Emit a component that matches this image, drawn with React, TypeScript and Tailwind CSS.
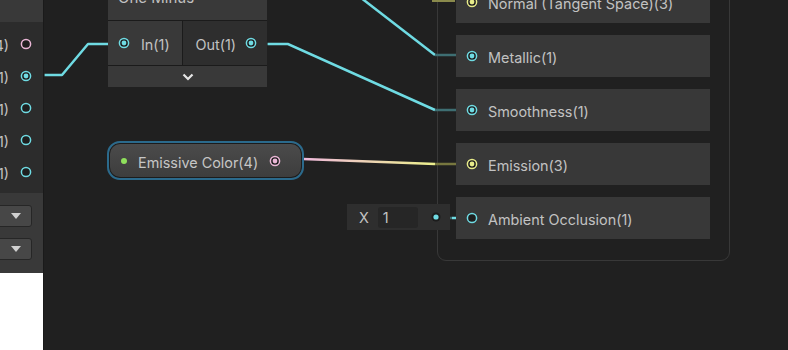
import React from "react";

type PortKind = "cyan" | "cyanHollow" | "pink" | "pinkHollow" | "yellow";

const COLORS: Record<string, string> = {
  cyan: "#6fdbe3",
  pink: "#eab6d6",
  yellow: "#e8ec8a",
};

/** Small port glyph: ring plus a center dot when connected */
function Port({ kind }: { kind: PortKind }) {
  const color = kind.startsWith("cyan") ? COLORS.cyan : kind.startsWith("pink") ? COLORS.pink : COLORS.yellow;
  const filled = !kind.endsWith("Hollow");
  return (
    <svg width="12" height="12" viewBox="0 0 12 12" className="shrink-0">
      <circle cx="6" cy="6" r="4.6" fill="#1e1e1e" stroke={color} strokeWidth="1.5" />
      {filled && <circle cx="6" cy="6" r="2.4" fill={color} />}
    </svg>
  );
}

const font = "font-['Inter','Noto_Sans',sans-serif]";

function SideRow({ label, kind }: { label: string; kind: PortKind }) {
  return (
    <div className="flex h-[32px] items-center justify-end gap-[11px] pr-[11px]">
      <span className="translate-y-[2px] whitespace-nowrap text-[14.4px] text-[#c2c2c2]">{label}</span>
      <Port kind={kind} />
    </div>
  );
}

function Dropdown() {
  return (
    <div className="flex h-[22px] w-[64px] -ml-[32px] items-center justify-end rounded-[3px] border border-[#262626] bg-[#474747] pr-[10px]">
      <svg width="10" height="6" viewBox="0 0 10 6">
        <path d="M0 0 L10 0 L5 6 Z" fill="#d0d0d0" />
      </svg>
    </div>
  );
}

function MasterRow({ label, kind }: { label: string; kind: PortKind }) {
  return (
    <div className="flex h-[42px] items-center gap-[10px] bg-[#383838] pl-[10px]">
      <Port kind={kind} />
      <span className="translate-y-[2px] text-[14.4px] text-[#c2c2c2]">{label}</span>
    </div>
  );
}

function Wires() {
  const dimCyan = "#3e6e72";
  return (
    <svg width="788" height="350" className="pointer-events-none absolute left-0 top-0">
      <defs>
        <linearGradient id="emis" x1="303" y1="0" x2="435" y2="0" gradientUnits="userSpaceOnUse">
          <stop offset="0" stopColor="#efb9dc" />
          <stop offset="1" stopColor="#ecef8c" />
        </linearGradient>
      </defs>
      {/* texture R -> one minus in */}
      <path d="M33 75 H45" stroke={dimCyan} strokeWidth="2.5" fill="none" />
      <path d="M45 75 H62 L88 44 H108" stroke={COLORS.cyan} strokeWidth="2.5" fill="none" strokeLinejoin="round" />
      <path d="M108 44 H120" stroke={dimCyan} strokeWidth="2.5" fill="none" />
      {/* one minus out -> smoothness */}
      <path d="M256 44 H268" stroke={dimCyan} strokeWidth="2.5" fill="none" />
      <path d="M268 44 H288 L435 110" stroke={COLORS.cyan} strokeWidth="2.5" fill="none" />
      <path d="M435 110 H467" stroke={dimCyan} strokeWidth="2.5" fill="none" />
      {/* offscreen -> metallic */}
      <path d="M356 -6 L435 55" stroke={COLORS.cyan} strokeWidth="2.5" fill="none" />
      <path d="M435 55 H467" stroke={dimCyan} strokeWidth="2.5" fill="none" />
      {/* emissive -> emission */}
      <path d="M303 159 L435 164" stroke="url(#emis)" strokeWidth="2.5" fill="none" />
      <path d="M435 164 H467" stroke="#77773f" strokeWidth="2.5" fill="none" />
      {/* normal stub */}
      <path d="M432 0 H455" stroke="#8a8a4c" strokeWidth="4" fill="none" />
      {/* ao */}
      <path d="M441 218 H452" stroke={dimCyan} strokeWidth="2.5" fill="none" />
      <path d="M452 218 H467" stroke={COLORS.cyan} strokeWidth="2.5" fill="none" />
    </svg>
  );
}

export default function App() {
  return (
    <div className={`relative h-[350px] w-[788px] overflow-hidden bg-[#202020] ${font}`}>
      {/* master stack frame */}
      <div className="absolute left-[437px] top-[-20px] h-[281px] w-[293px] rounded-b-[9px] border border-[#383838]" />

      <Wires />

      {/* sample texture node, mostly off-canvas */}
      <div className="absolute left-0 top-0 flex h-[350px] w-[44px] flex-col overflow-hidden border-r border-[#1a1a1a]">
        <div className="h-[22px] shrink-0 bg-[#393939]" />
        <div className="flex h-[171px] shrink-0 flex-col bg-[#2c2c2c] pt-[6px]">
          <SideRow label="RGBA(4)" kind="pinkHollow" />
          <SideRow label="R(1)" kind="cyan" />
          <SideRow label="G(1)" kind="cyanHollow" />
          <SideRow label="B(1)" kind="cyanHollow" />
          <SideRow label="A(1)" kind="cyanHollow" />
        </div>
        <div className="flex h-[80px] shrink-0 flex-col gap-[11px] bg-[#393939] pt-[12px]">
          <Dropdown />
          <Dropdown />
        </div>
        <div className="flex-1 bg-white" />
      </div>

      {/* one minus node */}
      <div className="absolute left-[108px] top-[-17px] flex w-[159px] flex-col bg-[#1b1b1b] text-[#c2c2c2]">
        <div className="flex h-[37px] items-center bg-[#393939] pb-[6px] pl-[10px] text-[15px]">One Minus</div>
        <div className="mt-[1px] flex h-[44px]">
          <div className="flex w-[74px] items-center gap-[11px] bg-[#393939] pl-[10px] text-[14.4px]">
            <Port kind="cyan" />
            <span className="translate-y-[2px]">In(1)</span>
          </div>
          <div className="ml-[1px] flex flex-1 items-center justify-end gap-[9px] bg-[#2e2e2e] pr-[10px] text-[14.4px]">
            <span className="translate-y-[2px]">Out(1)</span>
            <Port kind="cyan" />
          </div>
        </div>
        <div className="mt-[1px] flex h-[21px] items-center justify-center bg-[#393939]">
          <svg width="12" height="8" viewBox="0 0 12 8">
            <path d="M1.5 1.5 L6 6 L10.5 1.5" stroke="#e6e6e6" strokeWidth="2.2" fill="none" />
          </svg>
        </div>
      </div>

      {/* emissive color property node */}
      <div className="absolute left-[107px] top-[141px] flex h-[39px] w-[197px] items-center rounded-[13px] border-2 border-[#2b6a8c] bg-gradient-to-b from-[#4b4b4b] to-[#3d3d3d] pl-[12px] pr-[21px] shadow-[inset_0_0_0_1px_#1c1c1c]">
        <span className="h-[6px] w-[6px] rounded-full bg-[#8fe05c]" />
        <span className="ml-[11px] flex-1 translate-y-[2px] text-[14.4px] text-[#c6c6c6]">Emissive Color(4)</span>
        <Port kind="pink" />
      </div>

      {/* inline vector1 value */}
      <div className="absolute left-[347px] top-[204px] flex h-[26px] w-[103px] items-center bg-[#2e2e2e] pl-[12px] text-[14.4px] text-[#c2c2c2]">
        <span className="translate-y-[1px]">X</span>
        <div className="ml-[9px] flex h-[21px] w-[40px] items-center rounded-[3px] bg-[#262626] pl-[5px]">
          <span className="translate-y-[1px]">1</span>
        </div>
        <svg width="10" height="10" viewBox="0 0 10 10" className="ml-[13px]">
          <circle cx="5" cy="5" r="4.5" fill="#1c1c1c" />
          <circle cx="5" cy="5" r="2.6" fill={COLORS.cyan} />
        </svg>
      </div>

      {/* master stack rows */}
      <div className="absolute left-[456px] top-[-19px] flex w-[254px] flex-col gap-[12px]">
        <MasterRow label="Normal (Tangent Space)(3)" kind="yellow" />
        <MasterRow label="Metallic(1)" kind="cyan" />
        <MasterRow label="Smoothness(1)" kind="cyan" />
        <MasterRow label="Emission(3)" kind="yellow" />
        <MasterRow label="Ambient Occlusion(1)" kind="cyanHollow" />
      </div>
    </div>
  );
}
